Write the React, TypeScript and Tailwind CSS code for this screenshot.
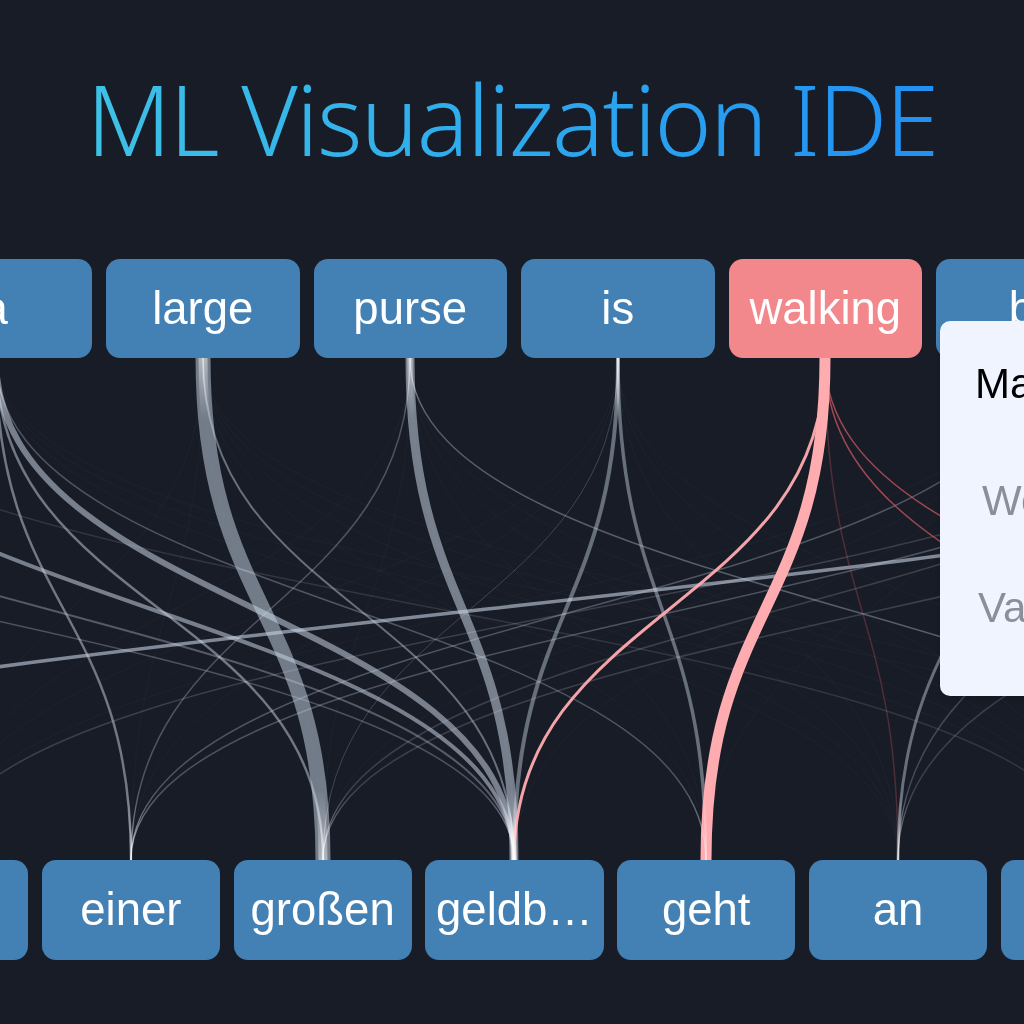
import React from 'react'

const sans = "font-['Liberation_Sans',Arial,sans-serif]"

const topWords = ['a', 'large', 'purse', 'is', 'walking', 'by']
const bottomWords = ['mit', 'einer', 'großen', 'geldb…', 'geht', 'an', 'vorbei']

// token centres, the words run on past both edges of the picture
const topX = (k: number) => 203 + k * 207.5
const botX = (k: number) => 131 + k * 191.8

type Edge = [number, number, number, string, number]

const GRAY = '#c6d2e2'
const PINK = '#ffacb0'
const RED = '#c2525f'

const edges: Edge[] = [
  // left side fan into geldb
  [-212, 514, 4, GRAY, 0.55],
  [-4, 514, 6, GRAY, 0.55],
  [-420, 514, 2, GRAY, 0.35],
  [-627, 514, 1.5, GRAY, 0.3],
  [-212, 1090, 1.5, GRAY, 0.15],
  [-4, 131, 2.5, GRAY, 0.5],
  [-4, 323, 2.5, GRAY, 0.5],
  [-4, 706, 1.5, GRAY, 0.3],
  [203, 323, 15, GRAY, 0.52],
  [203, 514, 2, GRAY, 0.45],
  [410, 514, 9, GRAY, 0.55],
  [410, 131, 1.5, GRAY, 0.3],
  [410, 1282, 1.5, GRAY, 0.35],
  [618, 514, 4, GRAY, 0.45],
  [618, 706, 3.5, GRAY, 0.45],
  [618, 323, 1, GRAY, 0.2],
  // the long flat one
  [1612, -638, 3.5, GRAY, 0.6],
  // rising to the right
  [1033, 131, 1.5, GRAY, 0.3],
  [1241, 131, 1.5, GRAY, 0.3],
  [1241, 323, 1.5, GRAY, 0.2],
  [1448, 323, 1.5, GRAY, 0.2],
  [1241, -60, 1.5, GRAY, 0.2],
  [1033, 898, 3, GRAY, 0.45],
  [1241, 898, 1.5, GRAY, 0.25],
  [1448, 898, 1.5, GRAY, 0.2],
  // walking
  [825, 898, 1.5, RED, 0.3],
  [825, 1282, 1.5, RED, 0.8],
  [825, 1474, 1.5, RED, 0.8],
  [825, 514, 3, PINK, 0.95],
  [825, 706, 11, PINK, 1],
]

const pathFor = (x1: number, x2: number) => `M${x1} 0C${x1} 251 ${x2} 251 ${x2} 502`

const Links = () => {
  const faint: React.ReactNode[] = []
  for (let i = -1; i < 5; i++) {
    for (let j = -1; j < 7; j++) {
      const x1 = topX(i)
      const color = i === 3 ? RED : GRAY
      faint.push(
        <path key={`${i}-${j}`} d={pathFor(x1, botX(j))} fill="none" stroke={color} strokeWidth={1} strokeOpacity={0.03} />
      )
    }
  }
  return (
    <svg width="1024" height="502" viewBox="0 0 1024 502" className="block shrink-0">
      <defs>
        {/* lines bunch up and go pale where they meet the tokens */}
        <linearGradient id="ends" gradientUnits="userSpaceOnUse" x1="0" y1="0" x2="0" y2="502">
          <stop offset="0" stopColor="#ffffff" stopOpacity="0.45" />
          <stop offset="0.12" stopColor="#ffffff" stopOpacity="0" />
          <stop offset="0.86" stopColor="#ffffff" stopOpacity="0" />
          <stop offset="1" stopColor="#ffffff" stopOpacity="0.45" />
        </linearGradient>
      </defs>
      {faint}
      {edges.map(([x1, x2, w, c, o], i) => (
        <path key={i} d={pathFor(x1, x2)} fill="none" stroke={c} strokeWidth={w} strokeOpacity={o} />
      ))}
      {edges
        .filter((e) => e[3] === GRAY)
        .map(([x1, x2, w], i) => (
          <path key={i} d={pathFor(x1, x2)} fill="none" stroke="url(#ends)" strokeWidth={Math.max(1, w * 0.6)} />
        ))}
    </svg>
  )
}

const Token = ({ word, width, active }: { word: string; width: string; active?: boolean }) => (
  <div
    className={`${width} h-full shrink-0 rounded-[14px] flex items-center justify-center text-white text-[45.5px] leading-none ${
      active ? 'bg-[#f2878c]' : 'bg-[#4380b4]'
    }`}
  >
    {word}
  </div>
)

export default function App() {
  return (
    <div className={`relative w-[1024px] h-[1024px] overflow-hidden bg-[#181c26] flex flex-col blur-[0.6px] ${sans}`}>
      <h1 className="h-[259px] shrink-0 pt-[58px] text-center whitespace-nowrap">
        <span className="font-['Noto_Sans',sans-serif] font-[350] text-[97px] tracking-[-1.7px] leading-[120px] bg-gradient-to-r from-[#3fc1e6] to-[#2190f3] bg-clip-text text-transparent">
          ML Visualization IDE
        </span>
      </h1>

      <div className="h-[99px] shrink-0 flex gap-[14px] ml-[-101.5px]">
        {topWords.map((w) => (
          <Token key={w} word={w} width="w-[193.5px]" active={w === 'walking'} />
        ))}
      </div>

      <Links />

      <div className="h-[100px] shrink-0 flex gap-[13.6px] ml-[-150px]">
        {bottomWords.map((w) => (
          <Token key={w} word={w} width="w-[178.2px]" />
        ))}
      </div>

      <div className="absolute left-[940px] top-[321px] w-[300px] h-[375px] rounded-[10px] bg-[#f0f4fe] shadow-md">
        <div className="pt-[38px] pl-[35px] text-[42px] leading-[50px] text-black">Matrix</div>
        <div className="pt-[67px] pl-[42px] text-[42px] leading-[50px] text-[#8a909a]">Weight</div>
        <div className="pt-[57px] pl-[38px] text-[42px] leading-[50px] text-[#8a909a]">Value</div>
      </div>
    </div>
  )
}
